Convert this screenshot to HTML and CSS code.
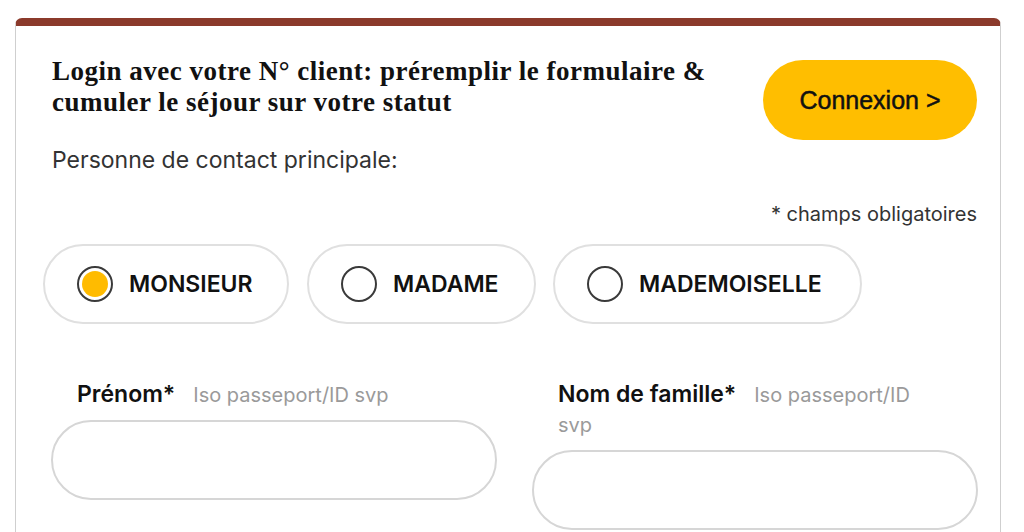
FILE: index.html
```html
<!DOCTYPE html>
<html lang="fr">
<head>
<meta charset="utf-8">
<link rel="stylesheet" href="styles.css">
</head>
<body>
<div class="card">
  <div class="header">
    <h2 class="title">Login avec votre N° client: préremplir le formulaire &amp; cumuler le séjour sur votre statut</h2>
    <button class="btn-login">Connexion &gt;</button>
  </div>
  <p class="contact">Personne de contact principale:</p>
  <p class="required">* champs obligatoires</p>
  <div class="pills">
    <label class="pill pill-1"><span class="radio checked"></span><span class="pill-text">MONSIEUR</span></label>
    <label class="pill pill-2"><span class="radio"></span><span class="pill-text">MADAME</span></label>
    <label class="pill pill-3"><span class="radio"></span><span class="pill-text">MADEMOISELLE</span></label>
  </div>
  <div class="fields">
    <div class="field">
      <div class="label"><span class="label-main">Prénom*</span><span class="hint">Iso passeport/ID</span> <span class="hint">svp</span></div>
      <div class="input"></div>
    </div>
    <div class="field">
      <div class="label"><span class="label-main">Nom de famille*</span><span class="hint">Iso passeport/ID</span> <span class="hint">svp</span></div>
      <div class="input"></div>
    </div>
  </div>
</div>
</body>
</html>
```

FILE: styles.css
```css
html, body {
  margin: 0;
  padding: 0;
  background: #ffffff;
}
body {
  font-family: Inter, "Noto Sans", sans-serif;
  color: #222;
  overflow: hidden;
  height: 532px;
}
.card {
  margin: 18px 23px 0 15px;
  border: 1px solid #cfcfcf;
  border-top: 8px solid #8b3a2b;
  border-radius: 7px 7px 0 0;
  padding: 27px 23px 0 36px;
  height: 600px;
}
.header {
  display: flex;
  justify-content: space-between;
  align-items: flex-start;
}
.title {
  margin: 3px 0 0;
  font-family: "Liberation Serif", "DejaVu Serif", serif;
  font-weight: bold;
  font-size: 27px;
  line-height: 31px;
  letter-spacing: 0.5px;
  color: #111;
  max-width: 680px;
}
.btn-login {
  margin-top: 7px;
  width: 214px;
  height: 80px;
  border: none;
  border-radius: 40px;
  background: #ffbe00;
  font-family: "Liberation Sans", Arial, sans-serif;
  font-size: 25px;
  color: #111;
  -webkit-text-stroke: 0.5px #111;
  cursor: pointer;
}
.contact {
  margin: 5px 0 0;
  font-size: 23px;
  line-height: 30px;
  color: #333;
}
.required {
  margin: 27px 0 0;
  text-align: right;
  font-size: 20px;
  line-height: 24px;
  color: #333;
}
.pills {
  display: flex;
  gap: 18px;
  margin: 18px 0 0 -9px;
}
.pill {
  box-sizing: border-box;
  height: 80px;
  border: 2px solid #e0e0e0;
  border-radius: 40px;
  display: flex;
  align-items: center;
  padding-left: 32px;
  gap: 16px;
}
.pill-1 { width: 246px; }
.pill-2 { width: 229px; }
.pill-3 { width: 309px; margin-left: -1px; }
.radio {
  box-sizing: border-box;
  width: 36px;
  height: 36px;
  border: 2px solid #3a3a3a;
  border-radius: 50%;
  display: flex;
  align-items: center;
  justify-content: center;
  flex: none;
}
.radio.checked::after {
  content: "";
  width: 26px;
  height: 26px;
  border-radius: 50%;
  background: #ffbb00;
}
.pill-text {
  font-weight: 600;
  font-size: 23px;
  color: #111;
}
.fields {
  display: grid;
  grid-template-columns: 446px 446px;
  column-gap: 35px;
  margin: 55px 0 0 -1px;
}
.label {
  padding-left: 26px;
  line-height: 30px;
  margin-bottom: 10px;
  padding-right: 50px;
  font-size: 20px;
  color: #9a9a9a;
}
.label-main {
  font-weight: 600;
  font-size: 23px;
  color: #111;
  margin-right: 18px;
}
.hint {
  color: #9a9a9a;
}
.input {
  box-sizing: border-box;
  height: 80px;
  border: 2px solid #d6d6d6;
  border-radius: 40px;
}
```
